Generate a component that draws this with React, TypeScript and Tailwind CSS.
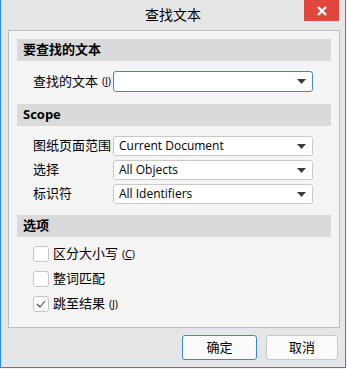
const font = { fontFamily: '"Open Sans", "Noto Sans CJK SC", sans-serif' };

function Caret() {
  return (
    <svg width="9" height="5" viewBox="0 0 9 5" className="shrink-0">
      <path d="M0 0 H9 L4.5 5 Z" fill="#3c3c3c" />
    </svg>
  );
}

function Combo({ value, focused }: { value?: string; focused?: boolean }) {
  return (
    <div
      className={`flex items-center justify-between w-[200px] bg-white rounded-[3px] pl-[5px] pr-[6px] text-[12px] text-black border ${
        focused ? "h-[21px] border-[#3d86d8]" : "h-[20px] border-[#c8c8c8]"
      }`}
    >
      <span className="leading-none">{value}</span>
      <Caret />
    </div>
  );
}

function Header({ text }: { text: string }) {
  return (
    <div className="h-[22px] bg-[#dadadb] flex items-center pl-[6px] text-[13px] font-bold text-black">
      {text}
    </div>
  );
}

function Key({ k }: { k: string }) {
  return (
    <span className="ml-[4px] text-[11px] tracking-tight">
      (<span className="underline">{k}</span>)
    </span>
  );
}

function Check({ label, k, checked }: { label: string; k?: string; checked?: boolean }) {
  return (
    <div className="flex items-center h-[16px] text-[13px] text-black">
      <div className="w-[16px] h-[16px] rounded-[3px] border border-[#c6c6c6] bg-white flex items-center justify-center">
        {checked && (
          <svg width="10" height="8" viewBox="0 0 10 8">
            <path d="M1 4 L4 7 L9 1" fill="none" stroke="#444" strokeWidth="1.1" />
          </svg>
        )}
      </div>
      <span className="ml-[4px]">{label}</span>
      {k && <Key k={k} />}
    </div>
  );
}

export default function App() {
  return (
    <div className="w-[347px] h-[369px] bg-[#f4f4f4]" style={font}>
      <div className="w-[346px] h-[368px] bg-[#e6e6e6] border-l border-r border-b border-[#2b87e0] flex flex-col">
        <div className="relative h-[30px] shrink-0 flex items-center justify-center text-[14px] text-black">
          <span className="-mt-[2px]">查找文本</span>
          <div className="absolute right-[6px] top-0 w-[35px] h-[21px] bg-[#e0483e] flex items-center justify-center">
            <svg width="10" height="10" viewBox="0 0 10 10">
              <path d="M1 1 L9 9 M9 1 L1 9" stroke="#fff" strokeWidth="2.4" />
            </svg>
          </div>
        </div>
        <div className="ml-[7px] mr-[5px] h-[298px] border border-[#bdbdbd] bg-[#f4f4f4] pt-[8px] px-[8px] flex flex-col">
          <Header text="要查找的文本" />
          <div className="flex items-center h-[21px] mt-[10px] pl-[16px] text-[13px] text-black">
            <div className="w-[80px] flex items-center">
              查找的文本
              <Key k="I" />
            </div>
            <Combo focused />
          </div>

          <div className="mt-[12px]">
            <Header text="Scope" />
          </div>
          <div className="flex flex-col gap-[4px] mt-[10px] pl-[16px] text-[13px] text-black">
            <div className="flex items-center h-[20px]">
              <div className="w-[80px]">图纸页面范围</div>
              <Combo value="Current Document" />
            </div>
            <div className="flex items-center h-[20px]">
              <div className="w-[80px]">选择</div>
              <Combo value="All Objects" />
            </div>
            <div className="flex items-center h-[20px]">
              <div className="w-[80px]">标识符</div>
              <Combo value="All Identifiers" />
            </div>
          </div>

          <div className="mt-[11px]">
            <Header text="选项" />
          </div>
          <div className="flex flex-col gap-[9px] mt-[9px] pl-[16px]">
            <Check label="区分大小写" k="C" />
            <Check label="整词匹配" />
            <Check label="跳至结果" k="J" checked />
          </div>
        </div>
        <div className="flex justify-end gap-[9px] mr-[7px] mt-[7px]">
          <button className="w-[75px] h-[25px] rounded-[3px] border border-[#3d86d8] bg-[#fbfbfb] text-[13px] text-black">
            确定
          </button>
          <button className="w-[72px] h-[25px] rounded-[3px] border border-[#c8c8c8] bg-[#fbfbfb] text-[13px] text-black">
            取消
          </button>
        </div>
      </div>
    </div>
  );
}
